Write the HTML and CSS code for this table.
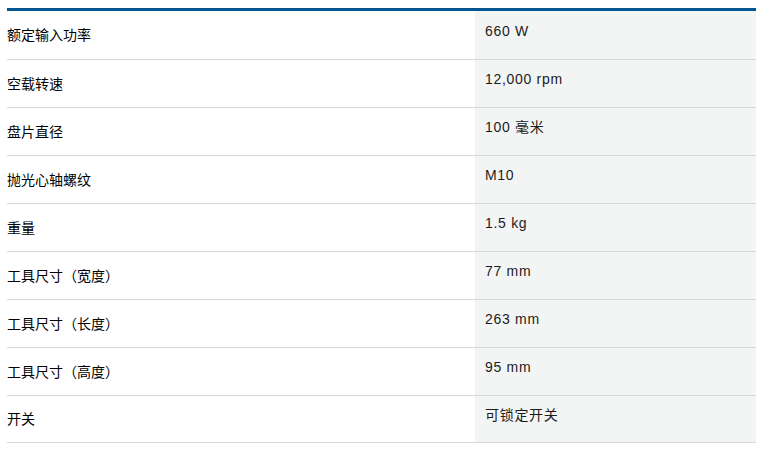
FILE: index.html
```html
<!DOCTYPE html>
<html lang="zh-CN">
<head>
<meta charset="utf-8">
<title>技术参数</title>
<link rel="stylesheet" href="styles.css">
</head>
<body>
<div class="page">
  <div class="specs">
    <div class="row"><div class="label">额定输入功率</div><div class="value">660 W</div></div>
    <div class="row"><div class="label">空载转速</div><div class="value">12,000 rpm</div></div>
    <div class="row"><div class="label">盘片直径</div><div class="value">100 毫米</div></div>
    <div class="row"><div class="label">抛光心轴螺纹</div><div class="value">M10</div></div>
    <div class="row"><div class="label">重量</div><div class="value">1.5 kg</div></div>
    <div class="row"><div class="label">工具尺寸（宽度）</div><div class="value">77 mm</div></div>
    <div class="row"><div class="label">工具尺寸（长度）</div><div class="value">263 mm</div></div>
    <div class="row"><div class="label">工具尺寸（高度）</div><div class="value">95 mm</div></div>
    <div class="row"><div class="label">开关</div><div class="value">可锁定开关</div></div>
  </div>
</div>
</body>
</html>
```

FILE: styles.css
```css
html, body {
  margin: 0;
  padding: 0;
  background: #ffffff;
}

.page {
  padding: 8px 0 0 7px;
}

.specs {
  width: 749px;
  border-top: 3px solid #005691;
  font-family: Arial, "Liberation Sans", "Noto Sans CJK SC", sans-serif;
  font-size: 14px;
  line-height: 20px;
}

.row {
  display: grid;
  grid-template-columns: 468px 281px;
  height: 47px;
  border-bottom: 1px solid #d6d7d8;
}

.row:first-child {
  height: 48px;
}

.row:last-child {
  height: 46px;
}

.label {
  display: flex;
  align-items: center;
  padding-bottom: 2px;
  color: #000000;
  font-family: "Noto Sans CJK SC", sans-serif;
}

.value {
  padding: 9px 10px 0 10px;
  background: #f3f5f5;
  color: #1c1c1c;
  letter-spacing: 0.7px;
}

.row:first-child .value {
  padding-top: 10px;
}
```
